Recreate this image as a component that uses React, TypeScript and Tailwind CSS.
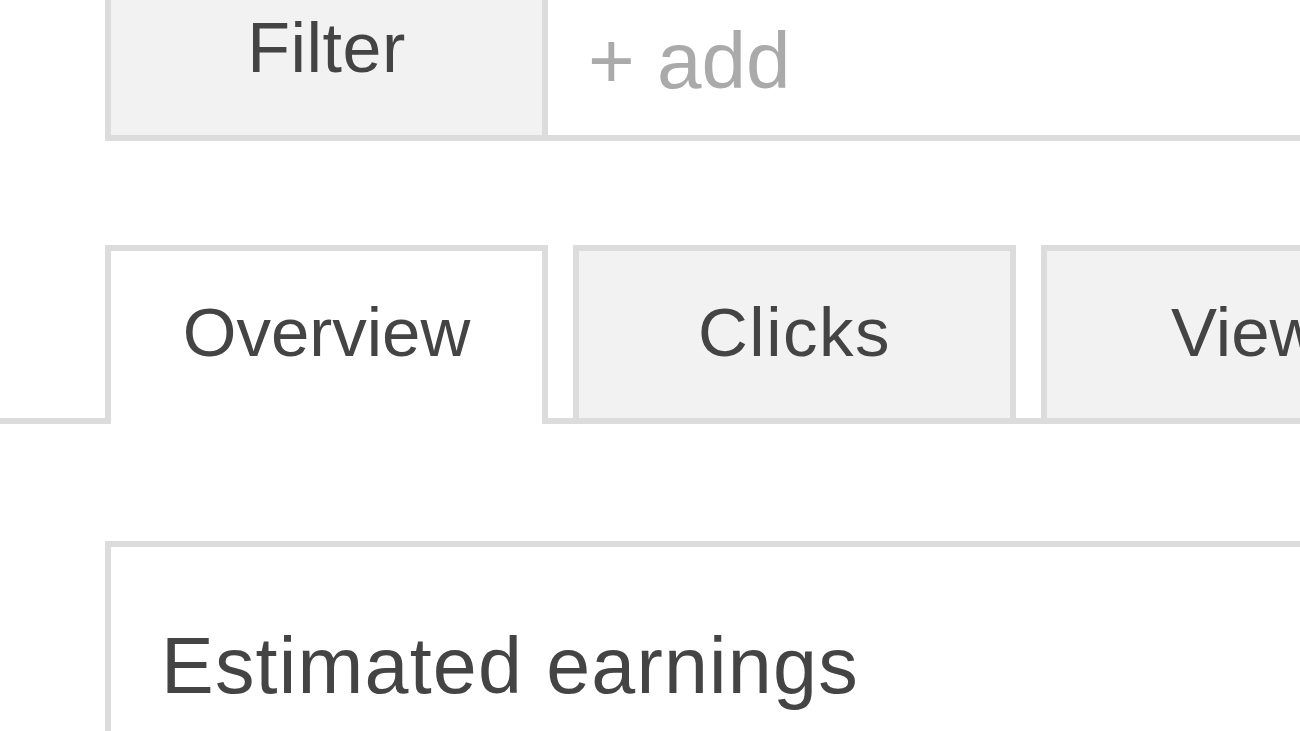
import React from "react";

export default function App() {
  return (
    <div
      className="relative w-[1300px] h-[731px] overflow-hidden bg-white text-[#444444]"
      style={{ fontFamily: '"Liberation Sans", Arial, sans-serif' }}
    >
      {/* Filter bar */}
      <div className="ml-[105px] mt-[-40px] flex h-[181px] w-[1400px] border-l-[6px] border-b-[6px] border-[#dcdcdc]">
        <div className="w-[437px] shrink-0 bg-[#f2f2f2] border-r-[6px] border-[#dcdcdc] flex justify-center">
          <span className="mt-[53px] text-[70px] leading-none tracking-[0.5px]">Filter</span>
        </div>
        <div className="flex-1 bg-white pl-[40px]">
          <span className="mt-[61px] block text-[80px] leading-none text-[#aaaaaa]">+ add</span>
        </div>
      </div>

      {/* Tabs */}
      <div className="mt-[104px] flex h-[179px] w-[1300px] items-end border-b-[6px] border-[#dcdcdc] pl-[105px] gap-[25px]">
        <div className="mb-[-6px] h-[179px] w-[443px] shrink-0 border-x-[6px] border-t-[6px] border-[#dcdcdc] bg-white flex justify-center">
          <span className="mt-[47px] text-[69px] leading-none">Overview</span>
        </div>
        <div className="h-[173px] w-[443px] shrink-0 border-x-[6px] border-t-[6px] border-[#dcdcdc] bg-[#f2f2f2] flex justify-center">
          <span className="mt-[47px] text-[69px] leading-none tracking-[1.5px]">Clicks</span>
        </div>
        <div className="h-[173px] w-[443px] shrink-0 border-x-[6px] border-t-[6px] border-[#dcdcdc] bg-[#f2f2f2] flex justify-center">
          <span className="mt-[47px] text-[69px] leading-none">Views</span>
        </div>
      </div>

      {/* Card */}
      <div className="ml-[105px] mt-[117px] h-[400px] w-[1400px] border-l-[6px] border-t-[6px] border-[#dcdcdc] bg-white pl-[50px] pt-[79px]">
        <span className="block text-[79px] leading-none tracking-[1.2px]">Estimated earnings</span>
      </div>
    </div>
  );
}
